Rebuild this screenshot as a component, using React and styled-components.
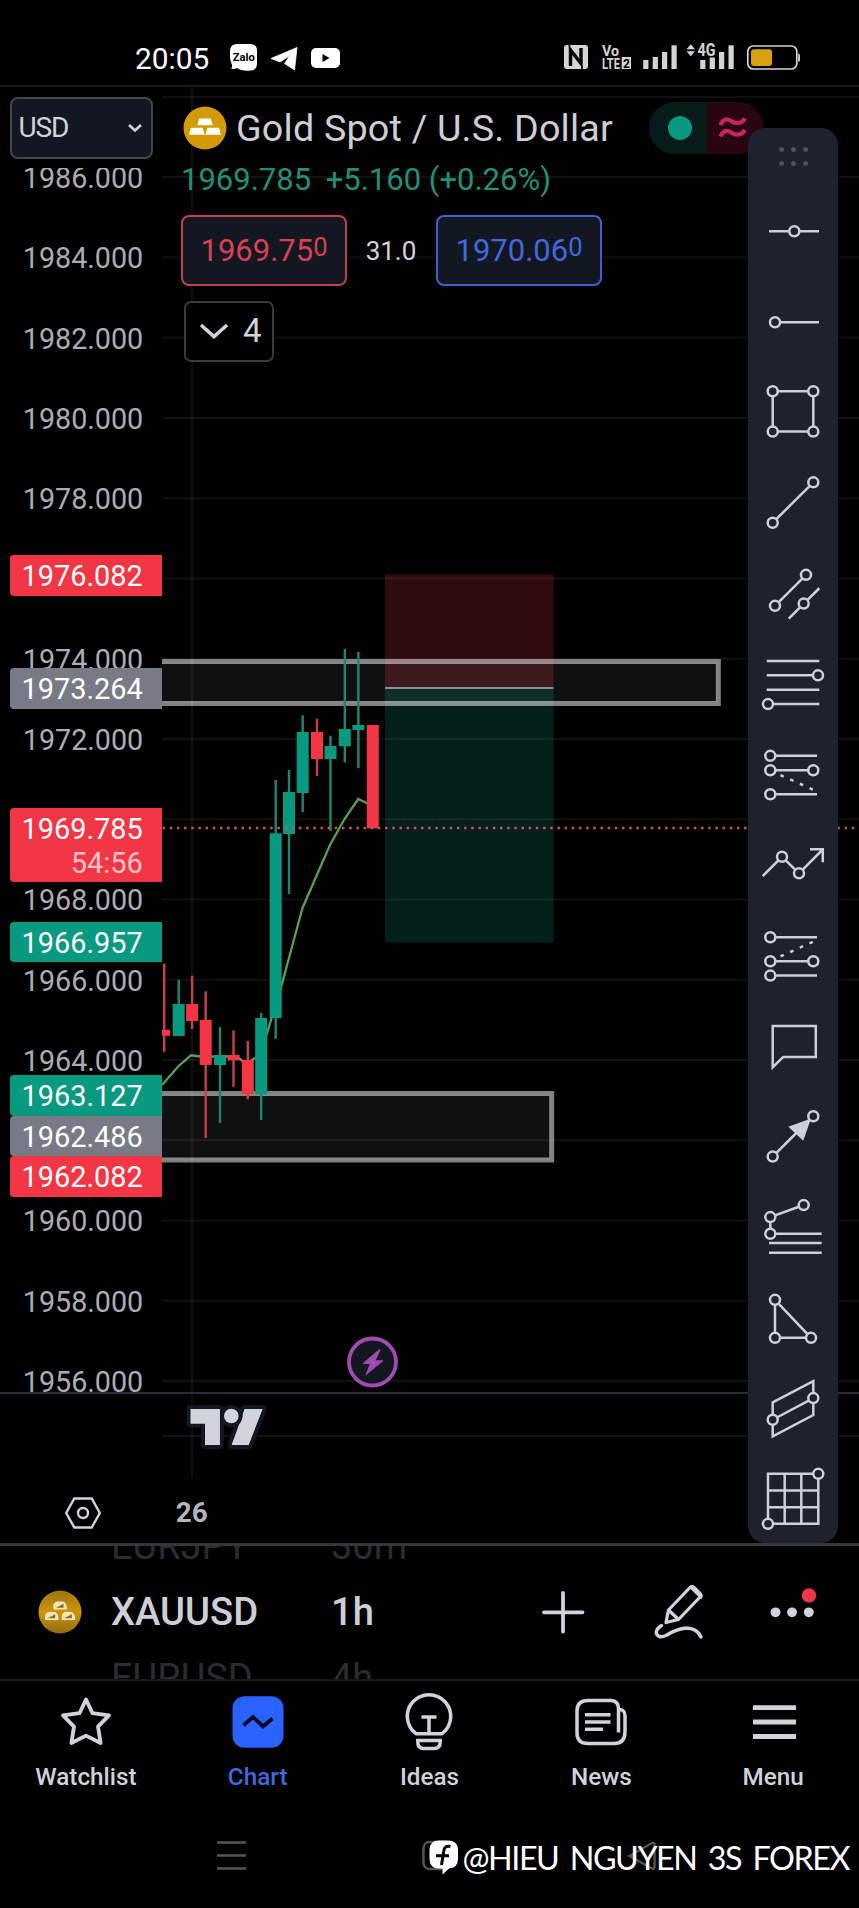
import React from "react";
import styled, { createGlobalStyle } from "styled-components";

const Global = createGlobalStyle`
  * { box-sizing: border-box; }
  html, body { margin: 0; padding: 0; background: #000; }
  body { font-family: Roboto, "Liberation Sans", sans-serif; color: #d1d4dc; }
  svg { display: block; }
`;

const UP = "#089981";
const DOWN = "#f23645";
const NEUTRAL = "#787b86";
const INK = "#d1d2da";

const Screen = styled.div`
  width: 859px;
  height: 1908px;
  display: flex;
  flex-direction: column;
  background: #000;
  overflow: hidden;
`;

/* ---------- status bar ---------- */

const StatusBar = styled.header`
  height: 87px;
  flex: none;
  display: flex;
  justify-content: space-between;
  padding: 40px 58px 0 135px;
  border-bottom: 2px solid #16171f;
`;

const StatusGroup = styled.div`
  display: flex;
  align-items: flex-start;
`;

const Clock = styled.span`
  width: 95px;
  font-size: 29.8px;
  line-height: 37px;
  color: #fff;
`;

function StatusIcons() {
  return (
    <svg width="112" height="34" viewBox="230 40 112 34">
      <path d="M237 44h13q7 0 7 7v12q0 7-6 7.5-9 1-14-2.500-3 1.500-6 .5 2-2 .500-5-1.500-3-1.500-7v-5.500q0-7 7-7z" fill="#fff" />
      <text x="243.700" y="60.500" fontSize="10.500" fontWeight="700" textAnchor="middle" textLength="22" lengthAdjust="spacingAndGlyphs" fill="#000">Zalo</text>
      <path d="M271 58.500L297 47.500 294.500 70 284.500 63.500 290 55.500 280 62z" fill="#fff" stroke="#fff" strokeWidth="0.800" strokeLinejoin="round" />
      <rect x="311" y="48" width="29" height="20" rx="5" fill="#fff" />
      <path d="M322.500 54v8l7-4z" fill="#000" />
    </svg>
  );
}

function SystemIcons() {
  const bars = [[0, 60], [9.500, 57], [18.800, 52], [28.300, 45.300]];
  return (
    <svg width="238" height="34" viewBox="563 40 238 34" fill="#d4d4d4">
      <rect x="564" y="45" width="24" height="24" rx="3" />
      <path d="M570.500 66V50l10.500 13.500V48" fill="none" stroke="#000" strokeWidth="3.400" />
      <path d="M569.500 45v2.500M581.800 69v-2.500" stroke="#000" strokeWidth="1.500" />
      <text x="602" y="56" fontSize="15" fontWeight="700" textLength="17" lengthAdjust="spacingAndGlyphs">Vo</text>
      <text x="602" y="69" fontSize="15.500" fontWeight="700" textLength="18" lengthAdjust="spacingAndGlyphs">LTE</text>
      <rect x="621.700" y="57" width="9.300" height="12" />
      <text x="626.400" y="67.500" fontSize="12" fontWeight="700" textAnchor="middle" fill="#000">2</text>
      {bars.map(([dx, top]) => (
        <rect key={dx} x={643.200 + dx} y={top} width="5.200" height={69 - top} />
      ))}
      {bars.map(([dx, top]) => (
        <rect key={dx} x={700.200 + dx} y={top} width="5.200" height={69 - top} />
      ))}
      <path d="M686.500 49.300h8.500l-4.250-5zM686.500 51.300h8.500l-4.250 5z" />
      <rect x="697" y="42" width="19" height="15.500" fill="#000" />
      <text x="697.500" y="56.300" fontSize="17.500" fontWeight="700" textLength="18" lengthAdjust="spacingAndGlyphs">4G</text>
      <rect x="747.800" y="46" width="49" height="23" rx="5.500" fill="none" stroke="#d4d4d4" strokeWidth="1.700" />
      <rect x="751" y="49.300" width="21" height="16.700" rx="3" fill="#d9a012" />
      <path d="M798.200 53.500q1.800 0 1.800 2v4.500q0 2-1.800 2z" />
    </svg>
  );
}

/* ---------- chart ---------- */

const ChartSection = styled.main`
  position: relative;
  height: 1458.500px;
  flex: none;
  display: flex;
  border-bottom: 3px solid #36373d;
`;

const AxisColumn = styled.div`
  width: 162px;
  flex: none;
  display: flex;
  flex-direction: column;
`;

const PriceAxis = styled.div`
  position: relative;
  height: 1307px;
  flex: none;
  overflow: hidden;
  display: flex;
  flex-direction: column;
  border-bottom: 2px solid #2a2d36;
`;

const SelectArea = styled.div`
  position: relative;
  z-index: 1;
  height: 81px;
  flex: none;
  padding: 10px 9px 0 9.500px;
  background: #000;
`;

const CurrencySelect = styled.button`
  width: 143px;
  height: 62px;
  display: flex;
  align-items: center;
  justify-content: space-between;
  padding: 0 9px 1px 7px;
  border: 2px solid #44464d;
  border-radius: 8px;
  background: #131722;
  color: ${INK};
  font: 400 28px Roboto, sans-serif;
  letter-spacing: -1.100px;
`;

const PriceRows = styled.div`
  margin-top: -30px;
  display: flex;
  flex-direction: column;
`;

const PriceLabel = styled.div`
  height: 80.270px;
  flex: none;
  padding-right: 18.800px;
  text-align: right;
  font-size: 28.700px;
  line-height: 80.270px;
  color: #acadb3;
`;

const PriceTag = styled.div`
  position: absolute;
  left: 9.500px;
  right: 0;
  top: ${(p) => p.$top - 87}px;
  height: ${(p) => p.$height || 40.500}px;
  padding-right: 19.200px;
  border-radius: 4px 0 0 4px;
  background: ${(p) => p.$color};
  color: #fff;
  text-align: right;
  font-size: 28.900px;
  line-height: 42.500px;
`;

const Countdown = styled.div`
  line-height: 24px;
  color: #ffc3c7;
`;

const AxisFooter = styled.div`
  flex: 1;
  display: flex;
  align-items: flex-end;
  justify-content: center;
  padding: 0 0 13px 4px;
`;

const Plot = styled.div`
  position: relative;
  flex: 1;
`;

const Legend = styled.div`
  position: absolute;
  left: 19px;
  top: 14px;
  display: flex;
  flex-direction: column;
  align-items: flex-start;
`;

const TitleRow = styled.div`
  height: 54px;
  display: flex;
  align-items: center;
  padding-left: 2px;
`;

const Title = styled.h1`
  margin: 0 0 0 9px;
  width: 413px;
  font-size: 37.700px;
  font-weight: 400;
  white-space: nowrap;
  letter-spacing: 0.200px;
  color: #cdced6;
`;

const StatusPill = styled.div`
  width: 115px;
  height: 52px;
  display: flex;
  border-radius: 26px;
  overflow: hidden;
`;

const PillHalf = styled.div`
  flex: 1;
  display: flex;
  align-items: center;
  justify-content: center;
  padding: ${(p) => p.$pad};
  background: ${(p) => p.$bg};
`;

const MarketDot = styled.span`
  width: 24px;
  height: 24px;
  border-radius: 50%;
  background: ${UP};
`;

const ChangeRow = styled.div`
  margin-top: 3px;
  height: 44px;
  display: flex;
  gap: 14.500px;
  font-size: 31px;
  line-height: 44px;
  white-space: pre;
  color: #219079;
`;

const QuoteRow = styled.div`
  margin-top: 13px;
  display: flex;
  align-items: center;
`;

const QuoteButton = styled.button`
  width: 166px;
  height: 71px;
  display: flex;
  align-items: flex-start;
  justify-content: center;
  padding: 0;
  border: 2px solid ${(p) => p.$border};
  border-radius: 8px;
  background: #131722;
  color: ${(p) => p.$color};
  font: 400 31px/67px Roboto, sans-serif;
`;

const Pip = styled.span`
  font-size: 25.500px;
  line-height: 61px;
`;

const Spread = styled.span`
  width: 89px;
  padding-right: 1px;
  text-align: center;
  font-size: 26px;
`;

const CollapseButton = styled.button`
  margin: 15px 0 0 3px;
  width: 90px;
  height: 61px;
  display: flex;
  align-items: center;
  gap: 14px;
  padding: 0 0 2px 13px;
  border: 2px solid #393b43;
  border-radius: 7px;
  background: #000;
  color: ${INK};
  font: 400 33px Roboto, sans-serif;
`;

const Toolbar = styled.aside`
  position: absolute;
  left: 748px;
  top: 41px;
  width: 90px;
  height: 1415px;
  display: flex;
  flex-direction: column;
  border-radius: 17px;
  background: #1e222d;
`;

const ToolHandle = styled.div`
  height: 58.450px;
  flex: none;
  display: grid;
  grid-template-columns: repeat(3, 5px);
  column-gap: 7px;
  row-gap: 9px;
  justify-content: center;
  align-content: start;
  padding-top: 19px;
`;

const HandleDot = styled.span`
  width: 5px;
  height: 5px;
  border-radius: 50%;
  background: #50535e;
`;

const ToolButton = styled.div`
  height: 90.500px;
  flex: none;
`;

const candles = [
  // centre x, wick top, wick bottom, body top, body bottom, rising
  [164.200, 963.700, 1051.700, 1029.700, 1035.800, 0],
  [178.700, 979.700, 1036, 1004, 1036, 1],
  [192.100, 975.700, 1029, 1004, 1021, 0],
  [205.700, 991.300, 1137.800, 1020, 1065, 0],
  [220, 1027, 1123, 1055, 1065, 1],
  [233.500, 1030.300, 1087, 1055, 1060.300, 0],
  [247.800, 1041, 1099.300, 1060, 1094.300, 0],
  [261.200, 1013, 1120, 1018, 1094.300, 1],
  [275.700, 780, 1039, 833.300, 1018, 1],
  [289, 770, 894, 792, 834, 1],
  [302.700, 715.300, 812, 732, 793, 1],
  [317, 718.700, 776, 732, 759, 0],
  [330.500, 735.700, 831, 746, 759, 1],
  [344.800, 649, 762.300, 729, 746.300, 1],
  [358.400, 652, 768.300, 725, 730, 1],
  [372.800, 725, 828, 725, 828.300, 0],
];

function ChartCanvas() {
  const rows = Array.from({ length: 17 }, (_, i) => 96.800 + 80.270 * i);
  return (
    <svg width="697" height="1455" viewBox="162 87 697 1455">
      <g stroke="#fff" strokeOpacity="0.065" strokeWidth="2">
        {rows.map((y) => (
          <line key={y} x1="162" x2="859" y1={y} y2={y} />
        ))}
        <line x1="162" x2="859" y1="1436" y2="1436" />
        <line x1="192" x2="192" y1="87" y2="1477.500" />
      </g>
      <line x1="162" x2="859" y1="1393" y2="1393" stroke="#2a2d36" strokeWidth="2" />

      <rect x="385" y="574.200" width="168.500" height="114" fill={DOWN} fillOpacity="0.200" />
      <rect x="385" y="688" width="168.500" height="254.500" fill={UP} fillOpacity="0.200" />
      <g fill="#fff" fillOpacity="0.063" stroke="#fff" strokeOpacity="0.500" strokeWidth="5">
        <rect x="140" y="661.500" width="578.300" height="42" />
        <rect x="140" y="1093.500" width="411.700" height="66.500" />
      </g>
      <path d="M385 688h168.500" stroke="#8b8d94" strokeWidth="2.200" />
      <path
        d="M162 1085L178.700 1066 191 1055.300 200 1056.500H237L246 1064 258 1056 267 1033 281.700 985 302.500 908 316 877 330 845 344.500 819 358.200 799 373 806"
        fill="none" stroke="#57a051" strokeWidth="2.300" />
      {candles.map(([x, wt, wb, bt, bb, up]) => (
        <g key={x} fill={up ? UP : DOWN}>
          <rect x={x - 1.200} y={wt} width="2.400" height={wb - wt} fill={up ? "#22836f" : "#c8404b"} />
          <rect x={x - 6} y={bt} width="12" height={bb - bt} />
        </g>
      ))}
      <path d="M162.500 828H859" stroke="#c95260" strokeWidth="2.400" strokeDasharray="2.500 4.680" />

      <circle cx="372.500" cy="1362" r="23.500" fill="#131722" stroke="#a04bb0" strokeWidth="3.800" />
      <path d="M379.500 1349.500L363 1363.500h7.500L366 1374.500 383 1360.800h-8l5-10.800z" fill="#a04bb0" stroke="#a04bb0" strokeWidth="1" strokeLinejoin="round" />

      <g fill="#d1d4dc" stroke="#131722" strokeWidth="8" strokeLinejoin="round" paintOrder="stroke">
        <path d="M190.700 1409H219.800V1445H205V1423.500H190.700z" />
        <path d="M244.500 1409H262.500L248.500 1445H231.700z" />
        <circle cx="231.300" cy="1416" r="7.300" />
      </g>
      <path d="M190.700 1409H219.800V1445H205V1423.500H190.700zM246.500 1409H262.500L248.500 1445H231.700z" fill="#d1d4dc" />

      <text x="191.800" y="1522" fontSize="27.800" fontWeight="700" textAnchor="middle" fill="#b2b5be">26</text>
    </svg>
  );
}

/* Drawing tools: p = stroked path, c = anchor circles, f = filled path, d = dotted path */
const tools = [
  { p: "M-24 0H26", c: [[1.300, 0]] },
  { p: "M-18 0H26", c: [[-18, 0]] },
  { p: "M-20.300-21H20.300V19.300H-20.300z", c: [[-20.300, -21], [20.300, -21], [20.300, 19.300], [-20.300, 19.300]] },
  { p: "M-20.300 19.500L20.300-20.900", c: [[-20.300, 19.500], [20.300, -20.900]] },
  { p: "M-18 12.600L13-18.400M-4.300 25.300L26.300-5", c: [[13, -18.400], [-18, 12.600], [10.700, 10.300]] },
  { p: "M-26.300-23.200H26.300M-26.300-8.900H25M-26.300 5.500H26.300M-25 19.800H26.300", c: [[25, -8.900], [-25, 19.800]] },
  { p: "M-22.700-18.400H24M-22.700-4H20.300M-22.700 20H24", c: [[-22.700, -18.400], [-22.700, -4], [20.300, -4], [-22.700, 20]], d: "M-12.500 .8L20 15.400" },
  { p: "M-30.300 10.800L-11-8.500 6 8.100 29.500-15.500M17-15.900H29.800V-2.900", c: [[-11, -8.500], [6, 8.100]] },
  { p: "M-22.700-18H24M-22.700 6H20.300M-22.700 20.300H24", c: [[-22.700, -18], [-22.700, 6], [20.300, 6], [-22.700, 20.300]], d: "M-12.500 1.200L20-13.500" },
  { p: "M-20.300-20.200H22.800V10.700H-9.700L-20.300 21z", c: [] },
  { p: "M-20.300 20.300L8-8", f: "M-2.300-9L16-15.700 9.700 2.300z", c: [[-20.300, 20.300], [20.300, -20]] },
  { p: "M10.700-22.200L-22.700-10.200V6.500H28.700M-24 15.800H28.700M-24 25.500H28.700", c: [[10.700, -22.200], [-22.700, -10.200], [-22.700, 6.500]] },
  { p: "M-18-17.400V20.600H18z", c: [[-18, -17.400], [-18, 20.600], [18, 20.600]] },
  { p: "M-20.300-5.900L20.300-27.200V6.800L-20.300 28.100zM-20.300 11.500L20.300-10.200", c: [[-20.300, 11.500], [20.300, -10.200]] },
  { p: "M-25-24.400H25.300V25.600H-25zM-8.300-24.400V25.600M8.300-24.400V25.600M-25-7.700H25.300M-25 9H25.300", c: [[25.300, -24.400], [-25, 25.600]] },
];

function ToolIcon({ tool }) {
  return (
    <svg width="90" height="90.500" viewBox="-45 -45.250 90 90.500" fill="none" stroke="#ccd0da" strokeWidth="2.500">
      <path d={tool.p} />
      {tool.d && <path d={tool.d} strokeDasharray="3.600 7" />}
      {tool.f && <path d={tool.f} fill="#ccd0da" />}
      {tool.c.map(([x, y]) => (
        <circle key={x + "," + y} cx={x} cy={y} r="5" fill="#1e222d" strokeWidth="2.500" />
      ))}
    </svg>
  );
}

/* ---------- symbol bar ---------- */

const SymbolBar = styled.section`
  height: 135.500px;
  flex: none;
  display: flex;
  align-items: stretch;
  overflow: hidden;
  border-bottom: 2px solid #15181f;
`;

const CoinCell = styled.div`
  width: 111px;
  flex: none;
  display: flex;
  align-items: center;
  padding-left: 37.500px;
`;

const Wheel = styled.div`
  width: ${(p) => p.$width}px;
  flex: none;
  display: flex;
  flex-direction: column;
  align-items: flex-start;
  justify-content: center;
`;

const WheelItem = styled.div`
  height: 66px;
  flex: none;
  font-size: ${(p) => (p.$active ? 38.200 : 38)}px;
  font-weight: ${(p) => (p.$active ? 500 : 400)};
  line-height: 66px;
  color: ${(p) => (p.$active ? "#cdced6" : "#2c2c2f")};
`;

const BarActions = styled.div`
  flex: 1;
  display: flex;
  align-items: center;
`;

const barText = [
  { width: 220, items: ["EURJPY", "XAUUSD", "EURUSD"] },
  { width: 189, items: ["30m", "1h", "4h"] },
];

function Coin({ detailed }) {
  const bar = "M-10 0L-7.500-6H7.500L10 0z";
  const nugget = "M-6 3.500Q-7-3.500-2.500-3.500H3Q6-3 6.500 3.500z";
  const spots = detailed
    ? [[0, -6.500], [-8.300, 4], [8.300, 4]]
    : [[0, -2.700], [-8.200, 6.700], [8.200, 6.700]];
  return (
    <svg width="44" height="44" viewBox="-22 -22 44 44">
      <defs>
        <linearGradient id="dimGold" x1="0" y1="0" x2="0" y2="1">
          <stop offset="0" stopColor="#9c7411" />
          <stop offset="0.500" stopColor="#cf960a" />
          <stop offset="1" stopColor="#8f6b12" />
        </linearGradient>
      </defs>
      <circle r="21.500" fill={detailed ? "url(#dimGold)" : "#d49a05"} />
      {spots.map(([x, y]) => (
        <g key={x} transform={`translate(${x} ${y})`}>
          {detailed ? (
            <>
              <path d={nugget} fill="#f3e3b4" stroke="#f6ecd0" strokeWidth="1" />
              <path d="M-4 2.200L3.500-1.800V2.200z" fill="#8a6a20" />
            </>
          ) : (
            <path d={bar} transform="scale(0.780 1.150)" fill="#fffdf2" />
          )}
        </g>
      ))}
    </svg>
  );
}

/* ---------- bottom navigation ---------- */

const NavBar = styled.nav`
  height: 126px;
  flex: none;
  display: grid;
  grid-template-columns: repeat(5, 1fr);
`;

const NavItem = styled.div`
  display: flex;
  flex-direction: column;
  align-items: center;
  padding-top: 10px;
  color: ${(p) => (p.$active ? "#3f69dc" : INK)};
  font-size: 24.300px;
  font-weight: 500;
  line-height: 30px;
`;

const NavIcon = styled.svg.attrs({ width: 64, height: 62, viewBox: "-32 -31 64 62", fill: "none" })`
  margin-bottom: 9px;
  stroke: ${INK};
  stroke-width: 3.500;
`;

const navItems = [
  { label: "Watchlist", icon: <path d="M0-22.500L6.500-8.800 23-6.600 12 4.600 14.600 21 0 13.600-14.600 21-12 4.600-23-6.600-6.500-8.800z" strokeWidth="3.800" strokeLinejoin="round" /> },
  {
    label: "Chart", active: true,
    icon: <>
      <rect x="-25.500" y="-25.700" width="51" height="51.500" rx="12" fill="#2962ff" stroke="none" />
      <path d="M-14.500 3.300L-5-5 5 4.500 14.500-3.500" stroke="#050a25" strokeWidth="3.800" />
    </>,
  },
  {
    label: "Ideas",
    icon: <>
      <path d="M-13 11.700A21.700 21.700 0 1 1 13 11.700z" strokeLinejoin="round" />
      <path d="M-7.500-5H7.500M0-5V11.500" />
      <path d="M-11.200 18.500H11.200V20Q11.200 26.500 5 26.500H-5Q-11.200 26.500-11.200 20z" />
    </>,
  },
  {
    label: "News",
    icon: <>
      <path d="M-14-21.500H10Q17.500-21 17.500-13.500V10.500M17.500-12.500Q24-13 24-6V10Q24 21.500 13 21.500H-13Q-24 21.500-24 11V-11Q-24-21.500-13-21.500" />
      <path d="M-16-7.300H9.500M-16 0H9.500M-16 7.200H2" />
    </>,
  },
  { label: "Menu", icon: <path d="M-20-14.300H23M-20 0H23M-20 14.500H23" strokeWidth="4.800" /> },
];

const SystemNav = styled.footer`
  flex: 1;
  position: relative;
`;

const Watermark = styled.div`
  position: absolute;
  right: 10px;
  top: 28px;
  display: flex;
  align-items: center;
  gap: 4px;
  color: #fff;
  font-family: Lato, sans-serif;
  font-size: 32.300px;
  line-height: 46px;
  letter-spacing: -1.450px;
  word-spacing: 4.500px;
  white-space: nowrap;
`;

/* Prices whose axis label sits entirely behind a tag */
const coveredPrices = [1976, 1970, 1962];

export default function App() {
  return (
    <Screen>
      <Global />
      <StatusBar>
        <StatusGroup>
          <Clock>20:05</Clock>
          <StatusIcons />
        </StatusGroup>
        <StatusGroup>
          <SystemIcons />
        </StatusGroup>
      </StatusBar>

      <ChartSection>
        <AxisColumn>
          <PriceAxis>
            <SelectArea>
              <CurrencySelect>
                USD
                <svg width="14" height="10" viewBox="0 0 14 10" fill="none" stroke={INK} strokeWidth="2.600"><path d="M1 2L7 7.500 13 2" /></svg>
              </CurrencySelect>
            </SelectArea>
            <PriceRows>
              {Array.from({ length: 16 }, (_, i) => 1986 - 2 * i).map((price) => (
                <PriceLabel key={price}>{!coveredPrices.includes(price) && price + ".000"}</PriceLabel>
              ))}
            </PriceRows>
            <PriceTag $top={555} $color={DOWN}>1976.082</PriceTag>
            <PriceTag $top={668} $color={NEUTRAL}>1973.264</PriceTag>
            <PriceTag $top={808} $height={74} $color={DOWN}>
              1969.785
              <Countdown>54:56</Countdown>
            </PriceTag>
            <PriceTag $top={921.500} $color={UP}>1966.957</PriceTag>
            <PriceTag $top={1075} $color={UP}>1963.127</PriceTag>
            <PriceTag $top={1115.500} $color={NEUTRAL}>1962.486</PriceTag>
            <PriceTag $top={1156} $color={DOWN}>1962.082</PriceTag>
          </PriceAxis>
          <AxisFooter>
            <svg width="38" height="34" viewBox="-19 -17 38 34" fill="none" stroke={INK} strokeWidth="2.400">
              <path d="M-16.800 0L-8.700-14.500H8.700L16.800 0 8.700 14.500H-8.700z" />
              <circle r="5" />
            </svg>
          </AxisFooter>
        </AxisColumn>

        <Plot>
          <ChartCanvas />
          <Legend>
            <TitleRow>
              <Coin />
              <Title>Gold Spot / U.S. Dollar</Title>
              <StatusPill>
                <PillHalf $bg="#051c18" $pad="0 0 0 5px"><MarketDot /></PillHalf>
                <PillHalf $bg="#290411" $pad="0 5px 0 0">
                  <svg width="28" height="24" viewBox="0 0 28 24" fill="none" stroke="#c92461" strokeWidth="4.200">
                    <path d="M1.500 9Q4 3 9 3.500 11 4 14 6 21 9.500 26 2.500M1.500 20.500Q4 14.500 9 15 11 15.500 14 17.500 21 21 26 14" />
                  </svg>
                </PillHalf>
              </StatusPill>
            </TitleRow>
            <ChangeRow>
              <span>1969.785</span>
              <span>+5.160 (+0.26%)</span>
            </ChangeRow>
            <QuoteRow>
              <QuoteButton $border="#c4404f" $color="#d94152">1969.75<Pip>0</Pip></QuoteButton>
              <Spread>31.0</Spread>
              <QuoteButton $border="#3a62d2" $color="#4169dc">1970.06<Pip>0</Pip></QuoteButton>
            </QuoteRow>
            <CollapseButton>
              <svg width="30" height="18" viewBox="0 0 30 18" fill="none" stroke={INK} strokeWidth="3.600"><path d="M2 3L15 14.500 28 3" /></svg>
              4
            </CollapseButton>
          </Legend>
        </Plot>

        <Toolbar>
          <ToolHandle>
            {Array.from({ length: 6 }, (_, i) => <HandleDot key={i} />)}
          </ToolHandle>
          {tools.map((tool, i) => (
            <ToolButton key={i}><ToolIcon tool={tool} /></ToolButton>
          ))}
        </Toolbar>
      </ChartSection>

      <SymbolBar>
        <CoinCell><Coin detailed /></CoinCell>
        {barText.map(({ width, items }) => (
          <Wheel key={width} $width={width}>
            {items.map((text, i) => <WheelItem key={text} $active={i === 1}>{text}</WheelItem>)}
          </Wheel>
        ))}
        <BarActions>
          <svg width="339" height="134" viewBox="520 1545 339 134" fill="none" stroke={INK} strokeWidth="3.800">
            <path d="M563 1593V1631.500M544 1612.300H582.500" strokeLinecap="round" />
            <path d="M691 1587L700.500 1596.500 678.500 1619.500 666 1622.500 668.500 1610 690 1587.500Q692.500 1585.500 694.500 1588L700.500 1594Q702 1596 700 1598M668.500 1610L678.500 1619.500" strokeWidth="3.200" strokeLinejoin="round" />
            <path d="M661.500 1625.500Q655 1630 656.500 1634 659 1638.500 666 1635.500 675 1629.500 686 1628 697 1628 701 1637" strokeWidth="3.400" strokeLinecap="round" />
            <g stroke="none" fill={INK}>
              <circle cx="775.500" cy="1612.300" r="4.900" />
              <circle cx="792" cy="1612.300" r="4.900" />
              <circle cx="808.800" cy="1612.300" r="4.900" />
              <circle cx="809" cy="1595.500" r="7.200" fill={DOWN} />
            </g>
          </svg>
        </BarActions>
      </SymbolBar>

      <NavBar>
        {navItems.map(({ label, active, icon }) => (
          <NavItem key={label} $active={active}>
            <NavIcon>{icon}</NavIcon>
            {label}
          </NavItem>
        ))}
      </NavBar>

      <SystemNav>
        <svg width="859" height="100" viewBox="0 1807 859 100" fill="none" stroke="#555" strokeWidth="2.400">
          <path d="M217 1842.500H246M217 1855.500H246M217 1868.500H246" />
          <rect x="423.500" y="1842" width="27.500" height="27" rx="6" />
          <path d="M629.500 1856L652 1843Q654.500 1842 654.500 1845V1866Q654.500 1870 652 1868.500z" />
        </svg>
        <Watermark>
          <svg width="30" height="36" viewBox="0 0 30 36">
            <path d="M10 0.500H19Q29 0.500 29 10V18.500Q29 28 20 28.500L13.500 34.500V28.500H10Q0.500 28.500 0.500 18.500V10Q0.500 0.500 10 0.500z" fill="#fff" />
            <path d="M21.500 6.500Q15.500 5 14.800 11L12.500 25M7 15.800H20" fill="none" stroke="#000" strokeWidth="3" />
          </svg>
          @HIEU NGUYEN 3S FOREX
        </Watermark>
      </SystemNav>
    </Screen>
  );
}
